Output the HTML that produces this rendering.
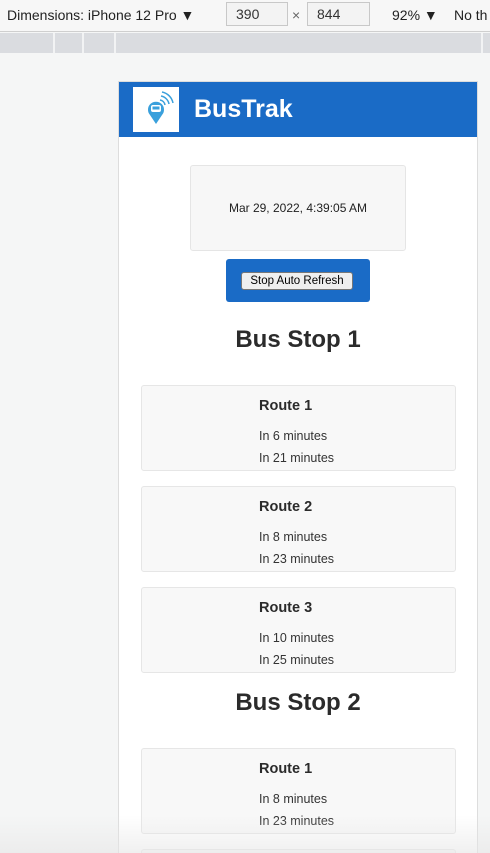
<!DOCTYPE html>
<html><head><meta charset="utf-8"><style>
*{box-sizing:border-box;margin:0;padding:0}
html,body{width:490px;height:853px;overflow:hidden}
body{background:#f5f6f6;font-family:"Liberation Sans",sans-serif;position:relative;color:#333}
.tb{position:absolute;left:0;top:0;width:490px;height:32px;background:#f7f7f7;border-bottom:1px solid #cfcfcf;font-size:14px;color:#222}
.tb span{position:absolute;top:7px}
.in{position:absolute;top:2px;height:24px;border:1px solid #c8c8c8;background:#f3f3f3;font-size:14px;color:#333;padding:3px 0 0 9px}
.rl{position:absolute;left:0;top:33px;width:490px;height:20px;background:#dadce0}
.rl i{position:absolute;top:0;width:2px;height:20px;background:#f2f3f4}
.dev{position:absolute;left:118px;top:81px;width:360px;height:772px;background:#fff;border:1px solid #ddd;border-bottom:none;overflow:hidden}
.hd{position:absolute;left:0;top:0;width:358px;height:55px;background:#1a6bc6}
.logo{position:absolute;left:14px;top:5px;width:46px;height:45px;background:#fff}
.hd b{position:absolute;left:75px;top:13px;font-size:25px;color:#fff}
.date{position:absolute;left:71px;top:83px;width:216px;height:86px;background:#f7f7f7;border:1px solid #e5e5e5;border-radius:3px;font-size:12px;text-align:center;line-height:84px;color:#222}
.btn{position:absolute;left:107px;top:177px;width:144px;height:43px;background:#1a6bc6;border-radius:3px}
.btn span{position:absolute;left:15px;top:13px;width:112px;height:18px;background:#efefef;border:1px solid #777;border-radius:3px;font-size:11.5px;text-align:center;line-height:16px;color:#000}
h2{position:absolute;left:0;width:358px;text-align:center;font-size:24px;font-weight:bold;color:#2b2b2b}
.card{position:absolute;left:22px;width:315px;height:86px;background:#f8f8f8;border:1px solid #e6e6e6;border-radius:3px;font-size:12.5px;color:#333}
.card div{position:absolute;left:117px}
.card .t{top:12px;font-size:14.5px;font-weight:bold;color:#2b2b2b}
.fade{position:absolute;left:0;top:815px;width:490px;height:38px;background:linear-gradient(rgba(240,240,240,0),rgba(230,230,230,.6))}
</style></head><body>
<div class="tb"><span style="left:7px">Dimensions: iPhone 12 Pro ▼</span>
<div class="in" style="left:226px;width:62px">390</div><span style="left:292px;color:#666">×</span>
<div class="in" style="left:307px;width:63px">844</div><span style="left:392px">92% ▼</span><span style="left:454px">No th</span></div>
<div class="rl"><i style="left:53px"></i><i style="left:82px"></i><i style="left:114px"></i><i style="left:481px"></i></div>
<div class="dev">
<div class="hd"><div class="logo"><svg width="46" height="45" viewBox="0 0 46 45"><path d="M23 37 L17 28 A8 8 0 1 1 29 28 Z" fill="#3aa0dc"/><rect x="18" y="18" width="10" height="7" rx="2" fill="#fff"/><rect x="19.5" y="19.5" width="7" height="3" fill="#3aa0dc"/><path d="M27 13 A6 6 0 0 1 32 18 M28 9 A10 10 0 0 1 36 17 M29 5 A14 14 0 0 1 40 16" stroke="#3aa0dc" stroke-width="1.5" fill="none"/></svg></div><b>BusTrak</b></div>
<div class="date">Mar 29, 2022, 4:39:05 AM</div>
<div class="btn"><span>Stop Auto Refresh</span></div>
<h2 style="top:244px">Bus Stop 1</h2>
<div class="card" style="top:303px"><div class="t">Route 1</div><div style="top:43px">In 6 minutes</div><div style="top:65px">In 21 minutes</div></div>
<div class="card" style="top:404px"><div class="t">Route 2</div><div style="top:43px">In 8 minutes</div><div style="top:65px">In 23 minutes</div></div>
<div class="card" style="top:505px"><div class="t">Route 3</div><div style="top:43px">In 10 minutes</div><div style="top:65px">In 25 minutes</div></div>
<h2 style="top:607px">Bus Stop 2</h2>
<div class="card" style="top:666px"><div class="t">Route 1</div><div style="top:43px">In 8 minutes</div><div style="top:65px">In 23 minutes</div></div>
<div class="card" style="top:767px"></div>
</div>
<div class="fade"></div>
</body></html>
